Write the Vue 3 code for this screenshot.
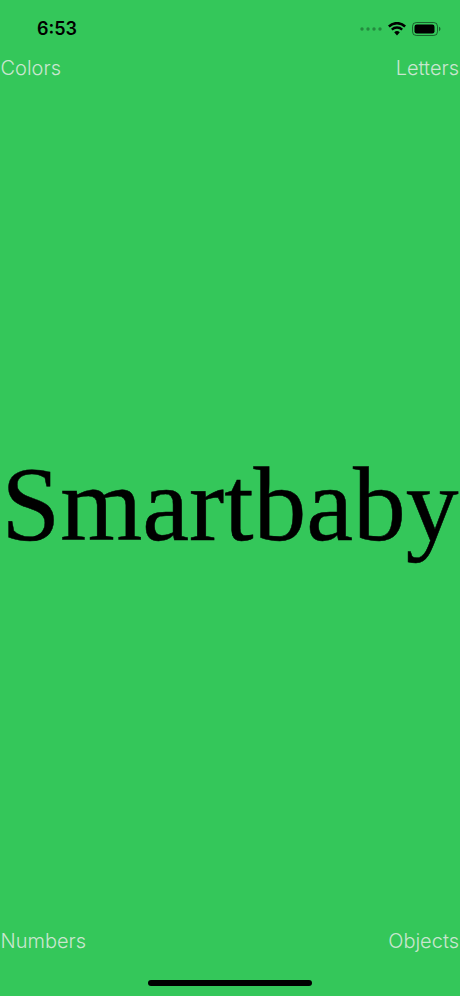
<script setup>
const links = { top: ['Colors', 'Letters'], bottom: ['Numbers', 'Objects'] }
</script>

<template>
  <div class="screen">
    <div class="status">
      <span class="time">6:53</span>
      <div class="icons">
        <svg class="dots" width="22" height="4" viewBox="0 0 22 4"><circle cx="2" cy="2" r="1.7"/><circle cx="8" cy="2" r="1.7"/><circle cx="14" cy="2" r="1.7"/><circle cx="20" cy="2" r="1.7"/></svg>
        <svg width="18" height="14" viewBox="0 0 18 14"><path d="M9 13.5 6.2 10.300a4 4 0 0 1 5.600 0Z"/><path d="M4.600 8.600 3 6.800a8.600 8.600 0 0 1 12 0l-1.600 1.800a6.200 6.200 0 0 0-8.800 0Z"/><path d="M1.700 5.400 0 3.500a13 13 0 0 1 18 0l-1.700 1.900a10.600 10.600 0 0 0-14.600 0Z"/></svg>
        <svg class="battery" width="29" height="14" viewBox="0 0 29 14"><rect x="0.500" y="0.500" width="25" height="13" rx="3.800" fill="none" stroke="#000" stroke-opacity=".5"/><rect x="2.500" y="2.500" width="20" height="9" rx="2.200"/><path d="M27 4.800v4.400a2.400 2.400 0 0 0 1.500-2.200 2.400 2.400 0 0 0-1.500-2.200Z" opacity=".5"/></svg>
      </div>
    </div>
    <div class="row">
      <span v-for="l in links.top" :key="l">{{ l }}</span>
    </div>
    <div class="center">Smartbaby</div>
    <div class="row">
      <span v-for="l in links.bottom" :key="l">{{ l }}</span>
    </div>
    <div class="home"><i></i></div>
  </div>
</template>

<style scoped>
.screen {
  width: 460px;
  height: 996px;
  background: #34c75a;
  display: flex;
  flex-direction: column;
  overflow: hidden;
}
.status {
  height: 55px;
  flex: none;
  display: flex;
  justify-content: space-between;
  align-items: center;
  padding: 3px 19px 0 37px;
  box-sizing: border-box;
  font: 600 18px/20px Inter, "Liberation Sans", sans-serif;
  color: #000;
}
.icons {
  display: flex;
  align-items: center;
  gap: 5px;
}
.dots { fill: #000; opacity: .3; margin-right: 1px; }
.battery { margin-left: 1px; }
.row {
  flex: none;
  height: 26px;
  display: flex;
  justify-content: space-between;
  padding: 0 1px 0 0.500px;
  font: 300 20px/26px Inter, "Liberation Sans", sans-serif;
  color: #c9e6cf;
}
.center {
  flex: 1;
  display: flex;
  align-items: center;
  justify-content: center;
  font: 105.500px "Liberation Serif", serif;
  -webkit-text-stroke: 0.500px #000;
  color: #000;
  white-space: nowrap;
}
.home {
  flex: none;
  height: 42px;
  display: flex;
  justify-content: center;
  align-items: flex-end;
  padding-bottom: 10px;
  box-sizing: border-box;
}
.home i {
  display: block;
  width: 164px;
  height: 6px;
  border-radius: 3px;
  background: #000;
}
</style>
